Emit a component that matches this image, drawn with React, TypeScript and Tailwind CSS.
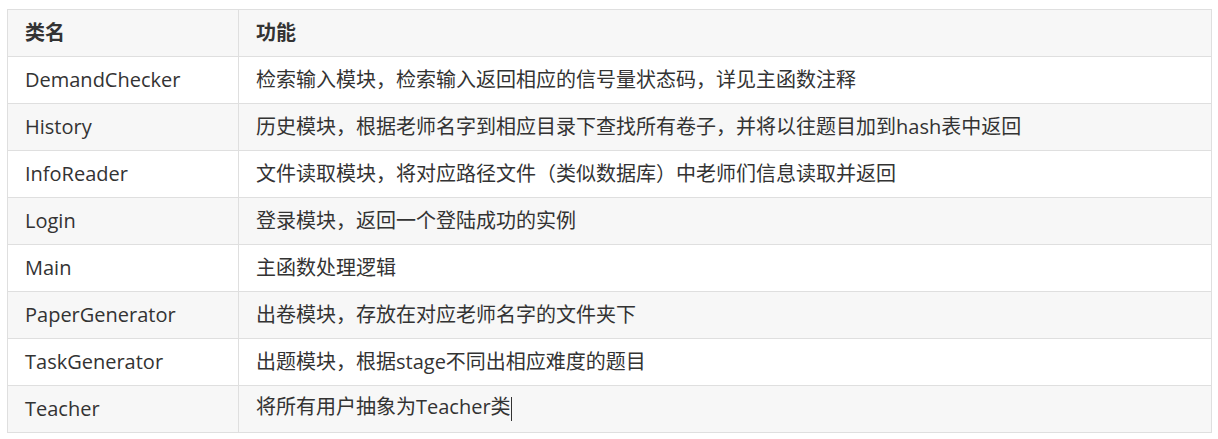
const rows = [
  { name: "DemandChecker", desc: "检索输入模块，检索输入返回相应的信号量状态码，详见主函数注释" },
  { name: "History", desc: "历史模块，根据老师名字到相应目录下查找所有卷子，并将以往题目加到hash表中返回" },
  { name: "InfoReader", desc: "文件读取模块，将对应路径文件（类似数据库）中老师们信息读取并返回" },
  { name: "Login", desc: "登录模块，返回一个登陆成功的实例" },
  { name: "Main", desc: "主函数处理逻辑" },
  { name: "PaperGenerator", desc: "出卷模块，存放在对应老师名字的文件夹下" },
  { name: "TaskGenerator", desc: "出题模块，根据stage不同出相应难度的题目" },
  { name: "Teacher", desc: "将所有用户抽象为Teacher类" },
];

const App = () => {
  return (
    <div className="bg-white min-h-screen pt-[9px] pl-[7px] pr-[6px] font-['Open_Sans','Noto_Sans_CJK_SC',sans-serif] text-[20px] text-[#333333]">
      <table className="w-full border-collapse table-fixed">
        <colgroup>
          <col className="w-[231px]" />
          <col />
        </colgroup>
        <thead>
          <tr className="bg-[#f7f7f7]">
            <th className="h-[47px] border border-[#dfdfdf] px-[17px] text-left font-bold leading-none">类名</th>
            <th className="h-[47px] border border-[#dfdfdf] px-[17px] text-left font-bold leading-none">功能</th>
          </tr>
        </thead>
        <tbody>
          {rows.map((row, i) => (
            <tr key={row.name} className={i % 2 === 1 ? "bg-[#f7f7f7]" : "bg-white"}>
              <td className="h-[47px] border border-[#dfdfdf] px-[17px] leading-none whitespace-nowrap">{row.name}</td>
              <td className="h-[47px] border border-[#dfdfdf] px-[17px] leading-none whitespace-nowrap">
                {row.desc}
                {i === rows.length - 1 && (
                  <span className="inline-block w-px h-[24px] bg-[#333333] align-middle" />
                )}
              </td>
            </tr>
          ))}
        </tbody>
      </table>
    </div>
  );
};

export default App;
